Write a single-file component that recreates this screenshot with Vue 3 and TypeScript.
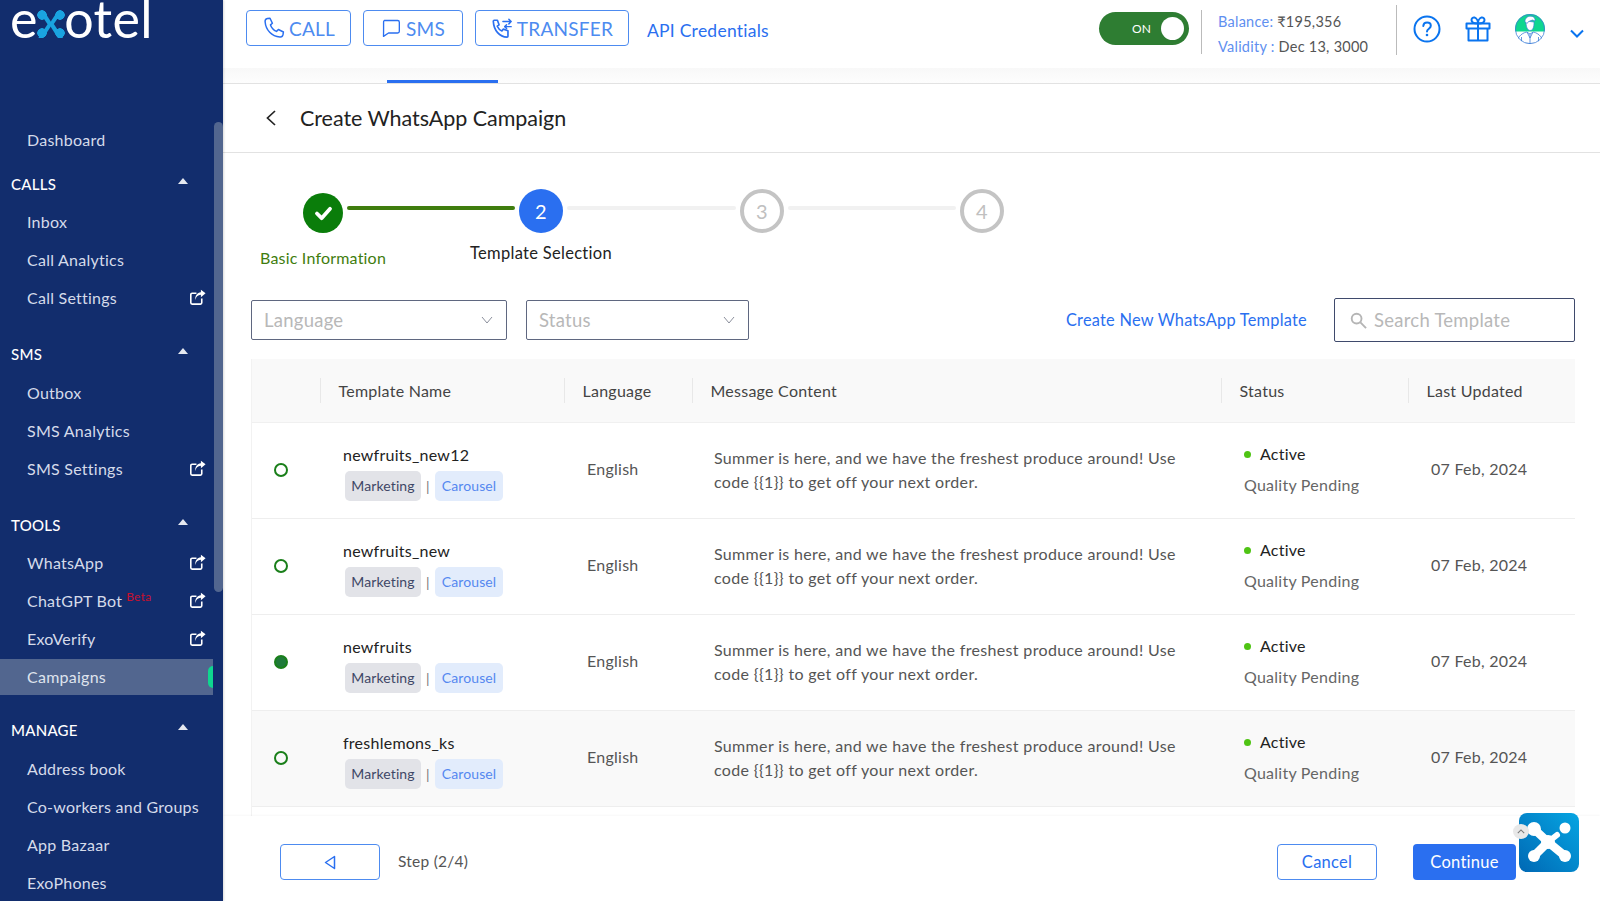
<script setup lang="ts">
interface NavItem { label: string; ext?: boolean; beta?: boolean; active?: boolean }
interface NavSection { title?: string; items: NavItem[] }
const nav: NavSection[] = [
  { items: [{ label: 'Dashboard' }] },
  { title: 'CALLS', items: [{ label: 'Inbox' }, { label: 'Call Analytics' }, { label: 'Call Settings', ext: true }] },
  { title: 'SMS', items: [{ label: 'Outbox' }, { label: 'SMS Analytics' }, { label: 'SMS Settings', ext: true }] },
  { title: 'TOOLS', items: [{ label: 'WhatsApp', ext: true }, { label: 'ChatGPT Bot', ext: true, beta: true }, { label: 'ExoVerify', ext: true }, { label: 'Campaigns', active: true }] },
  { title: 'MANAGE', items: [{ label: 'Address book' }, { label: 'Co-workers and Groups' }, { label: 'App Bazaar' }, { label: 'ExoPhones' }] },
]
const steps = [
  { n: '1', label: 'Basic Information', state: 'done' },
  { n: '2', label: 'Template Selection', state: 'current' },
  { n: '3', label: '', state: 'todo' },
  { n: '4', label: '', state: 'todo' },
]
const headers = ['Template Name', 'Language', 'Message Content', 'Status', 'Last Updated']
const rows = [
  { name: 'newfruits_new12', selected: false },
  { name: 'newfruits_new', selected: false },
  { name: 'newfruits', selected: true },
  { name: 'freshlemons_ks', selected: false },
]
</script>

<template>
  <div class="app">
    <aside class="sidebar">
      <div class="logo">e<span class="logo-x">x</span>otel</div>
      <nav class="nav">
        <section v-for="(s, i) in nav" :key="i" class="nav-section">
          <div v-if="s.title" class="nav-title">
            <span>{{ s.title }}</span>
            <i class="caret"></i>
          </div>
          <div v-for="item in s.items" :key="item.label" class="nav-item" :class="{ active: item.active }">
            <span>{{ item.label }}<sup v-if="item.beta" class="beta">Beta</sup></span>
            <svg v-if="item.ext" class="ext" viewBox="0 0 16 16" fill="none" stroke="#fff" stroke-width="1.5">
              <path d="M12 9v4a1.2 1.2 0 0 1-1.2 1.2H2.900A1.2 1.2 0 0 1 1.700 13V5.200A1.2 1.2 0 0 1 2.900 4H7" />
              <path d="M5.800 10.400C6.300 7.400 8.400 5.600 11.200 5.400V7.800L15.600 3.900 11.200 .6V3C7.600 3.400 5.600 6.400 5.800 10.400Z" fill="#fff" stroke="none" />
            </svg>
            <i v-if="item.active" class="pill"></i>
          </div>
        </section>
      </nav>
      <div class="scroll-track"><div class="scroll-thumb"></div></div>
    </aside>

    <main class="main">
      <header class="topbar">
        <div class="actions">
          <button class="act call">
            <svg viewBox="0 0 24 24" width="24" height="24" fill="none" stroke="#2a6ff0" stroke-width="1.5" stroke-linejoin="round"><path d="M5.400 2.600 8 2.200l2.400 5-1.900 1.700c.9 2.700 3.200 5.200 6 6.500l1.900-1.900 5 2.500-.4 2.700c-.3 1.500-1.600 2.500-3.100 2.300C9.700 20.300 3.800 14.100 3.100 5.700 3 4.200 4 2.900 5.400 2.600Z"/></svg>
            CALL
          </button>
          <button class="act sms">
            <svg viewBox="0 0 24 24" width="20" height="20" fill="none" stroke="#2a6ff0" stroke-width="1.6" stroke-linejoin="round"><path d="M4 3h16a2 2 0 0 1 2 2v11a2 2 0 0 1-2 2H9l-6 4 .1-6V5A2 2 0 0 1 4 3Z"/></svg>
            SMS
          </button>
          <button class="act transfer">
            <svg viewBox="0 0 24 24" width="22" height="22" fill="none" stroke="#2a6ff0" stroke-width="1.800" stroke-linejoin="round" stroke-linecap="round"><path d="M3.500 3.500H7l1.800 5-2 1.600c1 2.300 2.800 4.100 5.100 5.100l1.600-2 5 1.800V21c0 .6-.4 1-1 1C9.500 21.500 3 15 2.500 4.500c0-.6.400-1 1-1Z"/><path d="M13 5h9M19.500 2.500 22 5l-2.500 2.500M22 10.500h-7M17 8.500l-2 2 2 2" stroke-width="1.600"/></svg>
            TRANSFER
          </button>
          <a class="api">API Credentials</a>
        </div>
        <div class="right">
          <div class="toggle"><span>ON</span><i></i></div>
          <div class="balance">
            <div><span class="k">Balance:</span> ₹195,356</div>
            <div><span class="k">Validity :</span> Dec 13, 3000</div>
          </div>
          <div class="icons">
            <svg viewBox="0 0 28 28" width="28" height="28" fill="none" stroke="#0a74ef" stroke-width="2"><circle cx="14" cy="14" r="12.500"/><path d="M10.300 11c.2-2.200 1.800-3.400 3.800-3.400 2.100 0 3.700 1.300 3.700 3.200 0 2.900-3.800 2.900-3.800 5.800" stroke-linecap="round"/><circle cx="14" cy="20" r="1.300" fill="#0a74ef" stroke="none"/></svg>
            <svg viewBox="0 0 26 26" width="26" height="26" fill="none" stroke="#0a74ef" stroke-width="2" stroke-linejoin="round"><rect x="1.500" y="7.500" width="23" height="5"/><path d="M3.500 12.500V24.500H22.500V12.500M13 7.500V24.500M13 7.500C9 7.500 6.500 6 6.500 4 6.500 2.200 8 1.200 9.500 1.500 11.500 2 13 5 13 7.500ZM13 7.500C17 7.500 19.500 6 19.500 4 19.500 2.200 18 1.200 16.500 1.500 14.500 2 13 5 13 7.500Z"/></svg>
            <svg viewBox="0 0 30 30" width="30" height="30"><defs><clipPath id="av"><circle cx="15" cy="15" r="15"/></clipPath></defs><g clip-path="url(#av)"><rect width="30" height="30" fill="#fff"/><rect width="30" height="17.500" fill="#0fd68f"/><path d="M2 30c0-6.500 4-10.500 9.500-12l3.500 2 3.500-2c5.500 1.500 9.500 5.500 9.500 12Z" fill="#fff" stroke="#3d7fd8" stroke-width=".8"/><path d="M15 20v10M12 18l3 6 3-6M6.500 23v7M23.500 23v7" stroke="#3d7fd8" stroke-width=".8" fill="none"/><path d="M11 7c-.2 5 1.300 9.500 4 9.500s4.200-3 4-8.500Z" fill="#fff" stroke="#3d7fd8" stroke-width=".7"/><path d="M10 7.500C9.800 4 13 2 16 2.200c3 .1 4.500 2 4 4.800L17.500 6c-2 1-4.500 1-5.500 3.500Z" fill="#fff" stroke="#3d7fd8" stroke-width=".7"/></g><circle cx="15" cy="15" r="14.600" fill="none" stroke="#3d7fd8" stroke-width=".8"/></svg>
            <svg class="chev" viewBox="0 0 14 9" width="14" height="9" fill="none" stroke="#0a74ef" stroke-width="2"><path d="m1 1.500 6 6 6-6"/></svg>
          </div>
        </div>
      </header>

      <div class="tabband"><i class="tabline"></i></div>

      <div class="pagehead">
        <svg viewBox="0 0 14 18" width="14" height="18" fill="none" stroke="#222" stroke-width="1.700"><path d="M11 2 3.500 9 11 16"/></svg>
        <h1>Create WhatsApp Campaign</h1>
      </div>

      <div class="stepper">
        <template v-for="(s, i) in steps" :key="s.n">
          <div class="step" :class="s.state">
            <div class="dot">
              <svg v-if="s.state === 'done'" viewBox="0 0 20 16" width="19" height="15" fill="none" stroke="#fff" stroke-width="4" stroke-linecap="round" stroke-linejoin="round"><path d="m3 8 5 5 9-10"/></svg>
              <template v-else>{{ s.n }}</template>
            </div>
            <div v-if="s.label" class="step-label">{{ s.label }}</div>
          </div>
          <div v-if="i < 3" class="conn" :class="{ on: i === 0 }"></div>
        </template>
      </div>

      <div class="filters">
        <div class="select lang"><span>Language</span><svg viewBox="0 0 12 8" width="12" height="8" fill="none" stroke="#8b8f9c" stroke-width="1"><path d="m1 1 5 6 5-6"/></svg></div>
        <div class="select stat"><span>Status</span><svg viewBox="0 0 12 8" width="12" height="8" fill="none" stroke="#8b8f9c" stroke-width="1"><path d="m1 1 5 6 5-6"/></svg></div>
        <a class="create">Create New WhatsApp Template</a>
        <div class="search">
          <svg viewBox="0 0 18 18" width="17" height="17" fill="none" stroke="#b5b5b5" stroke-width="2"><circle cx="7" cy="7" r="5.200"/><path d="m11 11 6 6"/></svg>
          <span>Search Template</span>
        </div>
      </div>

      <div class="table">
        <div class="row head">
          <div class="c0"></div>
          <div v-for="h in headers" :key="h" class="th">{{ h }}</div>
        </div>
        <div v-for="(r, i) in rows" :key="r.name" class="row body" :class="{ alt: i === 3 }">
          <div class="c0"><i class="radio" :class="{ sel: r.selected }"></i></div>
          <div class="name">
            <div class="tname">{{ r.name }}</div>
            <div class="tags"><span class="tag mk">Marketing</span><span class="bar">|</span><span class="tag cr">Carousel</span></div>
          </div>
          <div class="lang-c">English</div>
          <div class="msg">Summer is here, and we have the freshest produce around! Use code &#123;&#123;1&#125;&#125; to get off your next order.</div>
          <div class="status">
            <div class="act-line"><i></i>Active</div>
            <div class="quality">Quality Pending</div>
          </div>
          <div class="date">07 Feb, 2024</div>
        </div>
      </div>

      <footer class="footer">
        <button class="back"><svg viewBox="0 0 12 14" width="12" height="15" fill="none" stroke="#2a6ff0" stroke-width="1.500" stroke-linejoin="round"><path d="M10.500 1 1.500 7l9 6Z"/></svg></button>
        <span class="stepno">Step (2/4)</span>
        <span class="spacer"></span>
        <button class="cancel">Cancel</button>
        <button class="continue">Continue</button>
      </footer>

      <div class="widget">
        <svg viewBox="0 0 60 59" width="60" height="59">
          <defs><linearGradient id="wg" x1="1" y1="0" x2="0" y2="1"><stop offset="0" stop-color="#06a5e2"/><stop offset="1" stop-color="#0068b4"/></linearGradient></defs>
          <rect width="60" height="59" rx="8" fill="url(#wg)"/>
          <g stroke="#fff" stroke-linecap="round" fill="#fff">
            <path d="M15 16 29 29 15 43M29 29 46 43" fill="none" stroke-width="8.500"/>
            <path d="M29 29 38 22" fill="none" stroke-width="6"/>
            <circle cx="15" cy="16" r="7" stroke="none"/><circle cx="46" cy="15" r="5.500" stroke="none"/><circle cx="15" cy="43" r="6" stroke="none"/><circle cx="46" cy="43" r="6" stroke="none"/><circle cx="29" cy="29" r="7" stroke="none"/>
          </g>
        </svg>
        <span class="w-up"><svg viewBox="0 0 10 6" width="8" height="5" fill="none" stroke="#777" stroke-width="1.300"><path d="m1 5 4-4 4 4"/></svg></span>
      </div>
    </main>
  </div>
</template>

<style>
html, body { margin: 0; overflow: hidden; }
</style>

<style scoped>
.app { display: flex; width: 1600px; height: 901px; overflow: hidden; font-family: Lato, "Open Sans", sans-serif; font-size: 16px; color: #444; background: #fff; letter-spacing: .25px; }
button { font-family: inherit; letter-spacing: inherit; cursor: pointer; }

.sidebar { position: relative; width: 223px; flex: none; background: #122d6d; color: #d5dbea; box-shadow: 1px 0 2px rgba(0,0,0,.15); z-index: 2; }
.logo { height: 120.500px; box-sizing: border-box; padding-left: 10px; font-size: 52px; line-height: 36px; color: #fff; font-weight: 400; letter-spacing: .4px; }
.logo-x { position: relative; display: inline-block; color: #1aa3e0; font-weight: 400; }
.logo-x::after { content: ""; position: absolute; left: -1px; right: -1px; top: 10px; height: 28px; background:
  radial-gradient(circle at 5px 5px, #1aa3e0 4.500px, transparent 5px),
  radial-gradient(circle at calc(100% - 5px) 5px, #1aa3e0 4.500px, transparent 5px),
  radial-gradient(circle at 5px calc(100% - 5px), #1aa3e0 4.500px, transparent 5px),
  radial-gradient(circle at calc(100% - 5px) calc(100% - 5px), #1aa3e0 4.500px, transparent 5px); }
.nav { width: 213px; }
.nav-section { margin-bottom: 18.500px; }
.nav-section:first-child { margin-bottom: 6px; }
.nav-section:nth-child(4) { margin-bottom: 16.500px; }
.nav-title { display: flex; justify-content: space-between; align-items: center; height: 38px; padding: 0 25px 0 11px; color: #fff; font-size: 15px; font-weight: 500; }
.caret { width: 0; height: 0; border: 5.500px solid transparent; border-top: 0; border-bottom: 6px solid #e5e8f0; margin-top: -6px; }
.nav-item { position: relative; display: flex; justify-content: space-between; align-items: center; height: 38px; padding: 0 7px 0 27px; font-size: 16px; white-space: nowrap; }
.nav-item.active { background: #52668f; height: 36px; margin: 1px 0; color: #dfe3ed; }
.ext { width: 17px; height: 17px; }
.beta { color: #c8102e; font-size: 12px; margin-left: 4px; vertical-align: 6px; line-height: 0; }
.pill { position: absolute; right: 0; top: 7px; width: 5px; height: 22px; background: #0fd68f; border-radius: 5px 0 0 5px; }
.scroll-track { position: absolute; right: 0; top: 0; bottom: 0; width: 10px; }
.scroll-thumb { position: absolute; left: 1px; top: 122px; width: 9px; height: 470px; background: #52668f; border-radius: 5px; }

.main { position: relative; flex: 1; min-width: 0; display: flex; flex-direction: column; }
.topbar { height: 68px; flex: none; display: flex; justify-content: space-between; align-items: center; padding: 0 16px 0 23px; background: #fff; }
.actions { display: flex; align-items: center; margin-top: -12px; }
.act { display: flex; align-items: center; justify-content: center; gap: 3px; height: 36px; padding: 0; border: 1px solid #4d8bf0; border-radius: 4px; background: #fff; color: #4d8bf0; font-size: 19px; font-weight: 400; box-sizing: border-box; }
.act.call { width: 105px; }
.act.sms { width: 100px; margin-left: 12px; gap: 5px; }
.act.transfer { width: 154px; margin-left: 12px; gap: 4px; }
.api { margin-left: 18px; color: #2a6ff0; font-size: 17.500px; position: relative; top: 2px; }
.right { display: flex; align-items: center; height: 50px; margin-top: -12px; }
.toggle { position: relative; width: 90px; height: 33px; border-radius: 17px; background: #2e7d32; color: #fff; font-size: 12px; display: flex; align-items: center; box-sizing: border-box; padding-left: 33px; }
.toggle i { position: absolute; right: 5px; top: 5px; width: 23px; height: 23px; border-radius: 50%; background: #fff; }
.balance { margin: 8px 0 0 12px; padding-left: 16px; border-left: 1px solid #bbb; width: 178px; height: 44px; color: #555; font-size: 14.500px; line-height: 24.500px; }
.balance .k { color: #5f8ff0; }
.icons { display: flex; align-items: center; height: 50px; box-sizing: border-box; padding: 2px 0 0 16px; border-left: 1px solid #bbb; gap: 24px; margin-top: 4px; }
.icons > svg { position: relative; top: -2px; }
.chev { margin-left: 1px; margin-top: 8px; }

.tabband { position: relative; height: 15px; flex: none; background: linear-gradient(#f8f8f8, #fdfdfd); border-bottom: 1px solid #e2e2e2; }
.tabline { position: absolute; left: 164px; bottom: 0; width: 111px; height: 3px; background: #2a6ff0; }
.pagehead { height: 69px; flex: none; box-sizing: border-box; display: flex; align-items: center; border-bottom: 1px solid #e2e2e2; padding: 0 0 0 41px; gap: 22px; }
.pagehead h1 { margin: 0; font-size: 21.500px; font-weight: 400; color: #222; letter-spacing: -.05px; }

.stepper { flex: none; height: 145px; box-sizing: border-box; display: flex; align-items: flex-start; padding: 36px 0 0 80px; }
.step { display: flex; flex-direction: column; align-items: center; width: 44px; flex: none; }
.dot { box-sizing: border-box; width: 44px; height: 44px; border-radius: 50%; display: flex; align-items: center; justify-content: center; font-size: 20px; }
.done .dot { width: 40px; height: 40px; margin-top: 4px; background: #0a7d0a; }
.done { width: 40px; }
.current .dot { background: #2a6ff0; color: #fff; }
.todo .dot { border: 4.500px solid #c4c4c4; color: #c0c0c0; }
.step-label { white-space: nowrap; font-size: 16.500px; margin-top: 10px; color: #222; letter-spacing: .3px; }
.done .step-label { color: #3f7d0e; font-size: 16px; margin-top: 15px; letter-spacing: .2px; }
.conn { flex: none; width: 168px; height: 4px; margin: 17px 4px 0; background: #f1f1f1; border-radius: 2px; }
.conn.on { background: #3f7d0e; }
.current + .conn { width: 169px; }

.filters { flex: none; height: 48px; display: flex; align-items: center; padding: 0 25px 0 28px; margin-top: -2px; }
.select { box-sizing: border-box; height: 40px; border: 1px solid #5f6780; border-radius: 2px; display: flex; align-items: center; justify-content: space-between; padding: 0 13px 0 12px; color: #b8b8b8; font-size: 18.500px; }
.select.lang { width: 256px; }
.select.stat { width: 223px; margin-left: 19px; }
.create { margin-left: auto; margin-top: -1px; color: #2a6ff0; font-size: 16.350px; }
.search { box-sizing: border-box; margin-left: 27px; width: 241px; height: 44px; border: 1px solid #3f4a6c; border-radius: 2px; display: flex; align-items: center; gap: 7px; padding-left: 15px; color: #b8b8b8; font-size: 18.500px; }

.table { flex: 1; min-height: 0; margin: 15px 25px 0 28px; border-left: 1px solid #f2f2f2; overflow: hidden; }
.row { display: grid; grid-template-columns: 68px 244px 128px 529px 187px 1fr; }
.row.head { height: 64px; background: #f9f9f9; align-items: center; border-bottom: 1px solid #f0f0f0; box-sizing: border-box; }
.th { border-left: 1px solid #e8e8e8; height: 25px; line-height: 25px; padding-left: 17.500px; color: #444; white-space: nowrap; }
.row.body { height: 96px; box-sizing: border-box; border-bottom: 1px solid #eee; align-items: center; }
.row.alt { background: #f9f9f9; }
.c0 { display: flex; padding-left: 22px; }
.row.body .c0 { margin-top: -2px; }
.radio { box-sizing: border-box; width: 14px; height: 14px; border-radius: 50%; border: 2.500px solid #1a7f1a; }
.radio.sel { background: #1f7a3a; }
.name { padding-left: 23px; margin-top: 7px; }
.tname { color: #222; font-size: 16px; line-height: 20px; margin-top: -2px; }
.tags { display: flex; align-items: center; margin: 6px 0 0 2px; font-size: 14px; }
.tag { height: 30px; line-height: 30px; border-radius: 5px; text-align: center; box-sizing: border-box; letter-spacing: .1px; }
.mk { width: 76px; background: #e2e3e8; color: #3f4766; }
.cr { width: 68px; background: #e2ecfc; color: #5588f0; }
.bar { width: 14px; text-align: center; color: #777; }
.lang-c { padding-left: 23px; color: #555; margin-top: -4px; }
.msg { padding-left: 22px; color: #555; line-height: 24px; width: 486px; font-size: 16px; letter-spacing: .34px; margin-top: -2px; }
.status { padding-left: 23px; }
.act-line { display: flex; align-items: center; color: #222; gap: 9px; line-height: 20px; margin-top: -2px; }
.act-line i { width: 7px; height: 7px; border-radius: 50%; background: #4fc414; }
.quality { color: #666; margin-top: 11px; line-height: 20px; }
.date { padding-left: 23px; color: #555; white-space: nowrap; margin-top: -4px; }

.footer { position: relative; z-index: 1; flex: none; height: 85px; box-sizing: border-box; display: flex; align-items: center; padding: 7px 84px 0 57px; background: #fff; box-shadow: 0 -1px 2px rgba(0,0,0,.03); }
.back, .cancel { box-sizing: border-box; width: 100px; height: 36px; background: #fff; border: 1px solid #4d8bf0; border-radius: 4px; display: flex; align-items: center; justify-content: center; }
.stepno { margin: -2px 0 0 18px; color: #555; font-size: 15.500px; }
.spacer { flex: 1; }
.cancel { color: #2a6ff0; font-size: 16.500px; }
.continue { margin-left: 36px; width: 103px; height: 36px; border: 0; border-radius: 4px; background: #2a6ff0; color: #fff; font-size: 16.500px; }
.widget { position: absolute; right: 21px; top: 813px; width: 60px; height: 59px; z-index: 3; }
.widget > svg { display: block; }
.w-up { position: absolute; left: -6px; top: 11px; width: 16px; height: 15px; border-radius: 50%; background: #e8e8e8; display: flex; align-items: center; justify-content: center; }
</style>
